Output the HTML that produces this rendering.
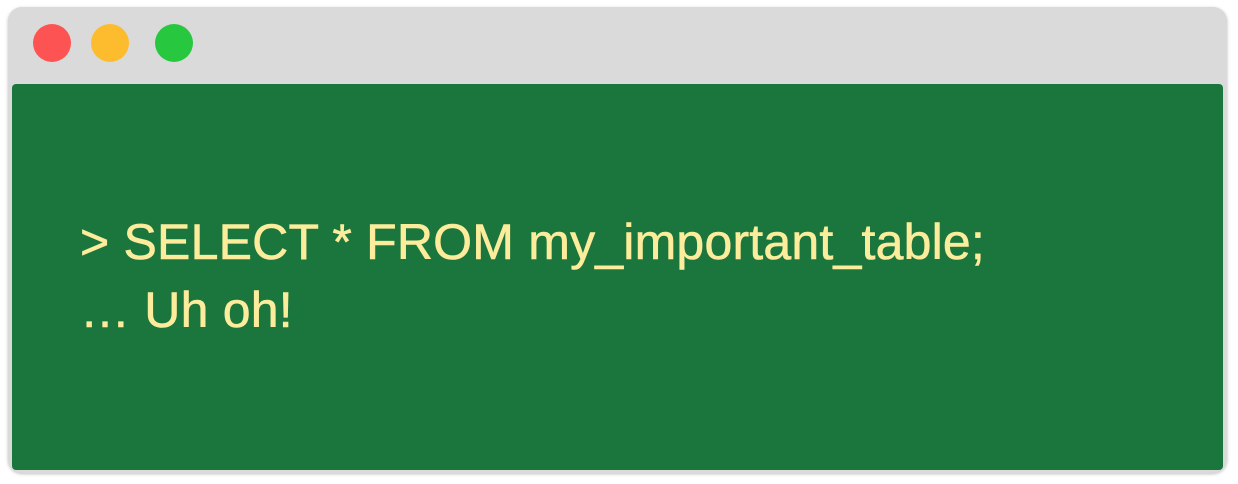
<!DOCTYPE html>
<html><head><style>
html,body{margin:0;padding:0;background:#fff;width:1238px;height:484px;overflow:hidden}
.win{position:absolute;left:8px;top:7px;width:1219px;height:466px;background:#dadada;border-radius:14px;box-shadow:0 1px 3px rgba(0,0,0,.25)}
.g{position:absolute;left:12px;top:84px;width:1211px;height:386px;background:#1b763d;border-radius:4px}
.d{position:absolute;top:24px;width:38px;height:38px;border-radius:50%}
.t{position:absolute;left:80px;font-family:"Liberation Sans",sans-serif;font-size:50px;color:#fcec9c;white-space:nowrap;-webkit-text-stroke:0.6px #fcec9c;letter-spacing:0.2px}
</style></head><body>
<div class="win"></div>
<div class="d" style="left:33px;background:#fd5453"></div>
<div class="d" style="left:91px;background:#fdbc2d"></div>
<div class="d" style="left:155px;background:#27c840"></div>
<div class="g"></div>
<div class="t" style="top:213px">&gt; SELECT * FROM my_important_table;</div>
<div class="t" style="top:281px">… Uh oh!</div>
</body></html>
